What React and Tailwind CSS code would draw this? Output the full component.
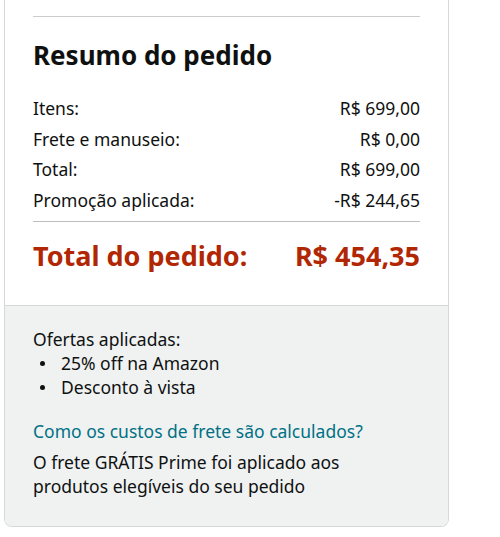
export default function App() {
  const rows = [
    ["Itens:", "R$ 699,00"],
    ["Frete e manuseio:", "R$ 0,00"],
    ["Total:", "R$ 699,00"],
    ["Promoção aplicada:", "-R$ 244,65"],
  ];
  const offers = ["25% off na Amazon", "Desconto à vista"];
  return (
    <div className="w-[500px] h-[537px] bg-white text-[#0F1111]" style={{ fontFamily: '"Noto Sans", sans-serif' }}>
      <div className="ml-[4px] w-[445px] border border-t-0 border-[#D5D9D9] rounded-b-lg overflow-hidden">
        <div className="px-7 pt-4 pb-[33px] bg-white">
          <div className="h-px bg-[#C9CDCD]" />
          <h2 className="mt-[22px] text-[26px] leading-8 font-bold">Resumo do pedido</h2>
          <div className="mt-[22px] text-[17.5px]">
            {rows.map(([l, r]) => (
              <div key={l} className="flex justify-between leading-[30.5px]">
                <span>{l}</span>
                <span>{r}</span>
              </div>
            ))}
          </div>
          <div className="mt-[6px] h-px bg-[#BBBFBF]" />
          <div className="mt-[18px] flex justify-between text-[27px] leading-8 font-bold text-[#B12704]">
            <span>Total do pedido:</span>
            <span>R$ 454,35</span>
          </div>
        </div>
        <div className="border-t border-[#D5D9D9] bg-[#F0F2F2] px-7 pt-[21px] pb-[28px] text-[17.5px] leading-6">
          <div>Ofertas aplicadas:</div>
          <ul>
            {offers.map((o) => (
              <li key={o} className="flex items-center">
                <span className="w-[28px] flex">
                  <span className="ml-[7px] w-[5px] h-[5px] rounded-full bg-[#0F1111]" />
                </span>
                <span>{o}</span>
              </li>
            ))}
          </ul>
          <div className="mt-5 text-[#007185]">Como os custos de frete são calculados?</div>
          <p className="mt-[7px]">O frete GRÁTIS Prime foi aplicado aos<br />produtos elegíveis do seu pedido</p>
        </div>
      </div>
    </div>
  );
}
